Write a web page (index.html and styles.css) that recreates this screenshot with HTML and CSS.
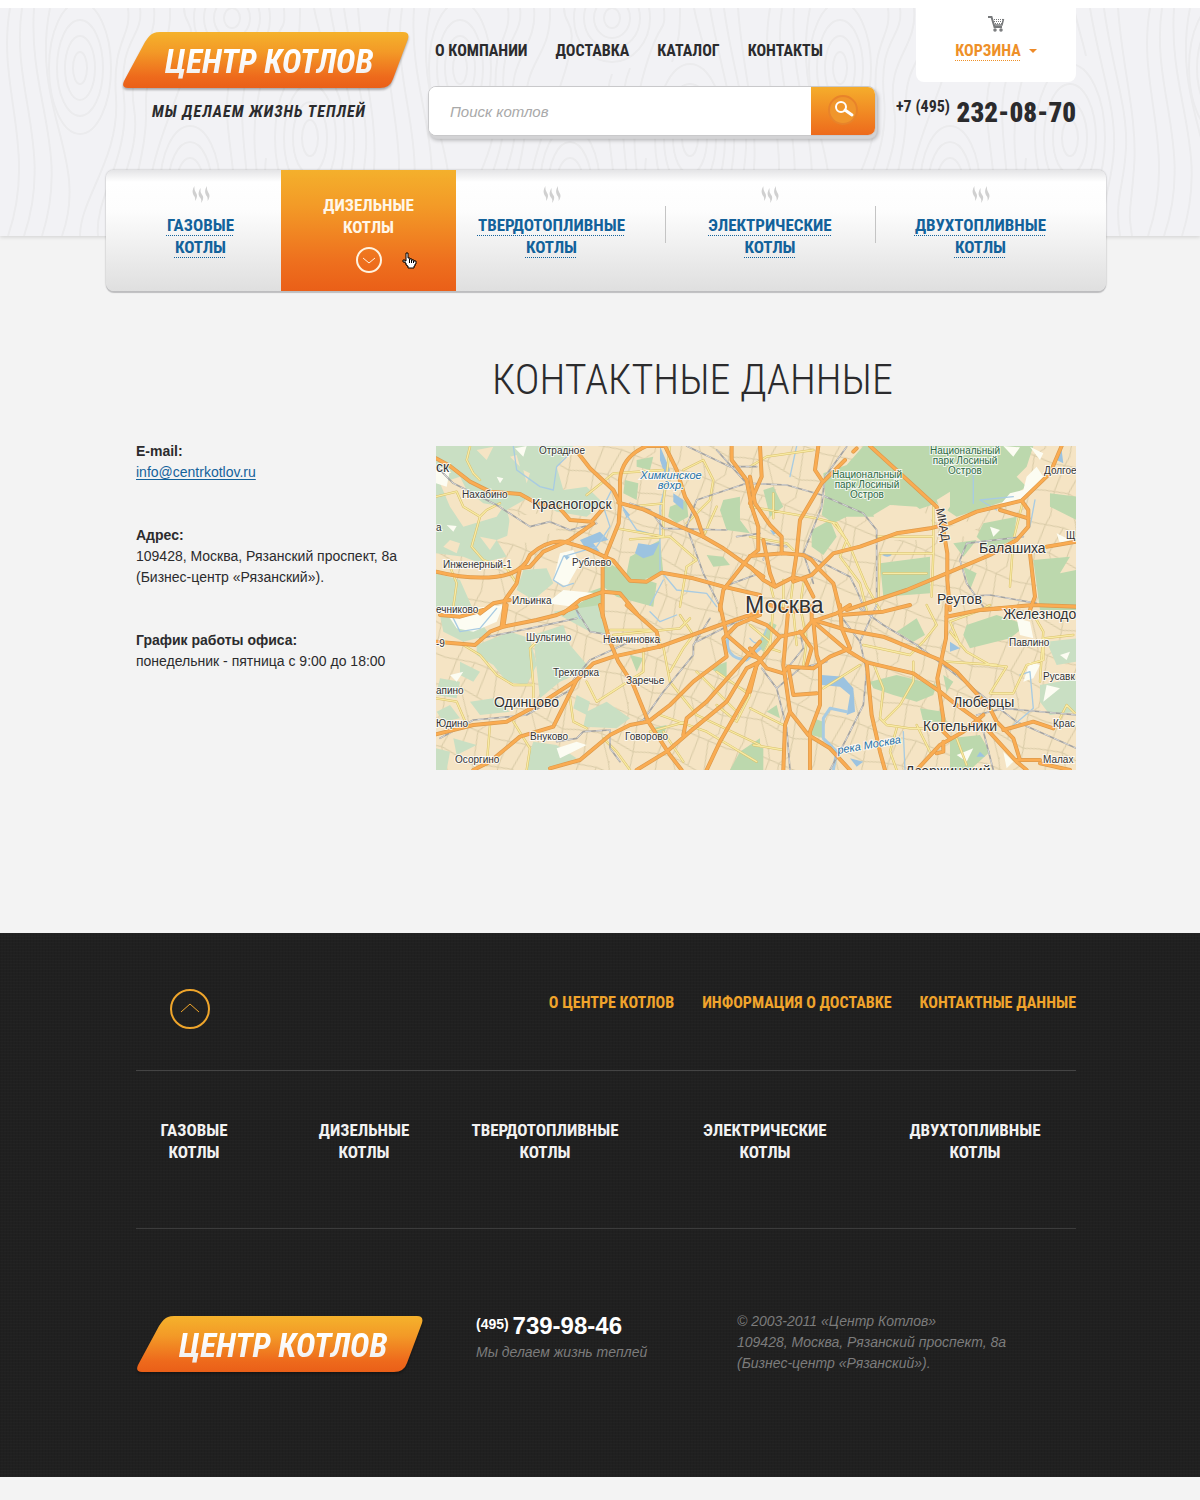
FILE: index.html
```html
<!DOCTYPE html>
<html lang="ru">
<head>
<meta charset="utf-8">
<meta name="viewport" content="width=device-width, initial-scale=1">
<title>Центр Котлов — контактные данные</title>
<link rel="stylesheet" href="styles.css">
</head>
<body>
<svg class="sprite" width="0" height="0" aria-hidden="true">
  <defs>
    <linearGradient id="flame" x1="0" y1="0" x2="0" y2="1">
      <stop offset="0" stop-color="#f5b22c"/><stop offset=".35" stop-color="#f39a27"/><stop offset=".8" stop-color="#ee6a1c"/><stop offset="1" stop-color="#ea5f18"/>
    </linearGradient>
    <linearGradient id="logoText" x1="0" y1="0" x2="0" y2="1">
      <stop offset=".3" stop-color="#fff"/><stop offset="1" stop-color="#ececec"/>
    </linearGradient>
    <symbol id="steam" viewBox="0 0 18 17">
      <path d="M2.500 0C-.5 5 .5 8 2.500 10.500Q3.500 12 3 15C6 11 5 8 3.800 6.500Q2 4 2.500 0Z"/>
      <path d="M8.500 2C5.500 7 6.500 10 8.500 12Q9.800 13.500 9.200 17C12 13 11.500 10 9.900 8.500Q8 6 8.500 2Z"/>
      <path d="M15 0C12 5 13 8 15 10.500Q16 12 15.500 15C18.500 11 17.500 8 16.300 6.500Q14.500 4 15 0Z"/>
    </symbol>
    <symbol id="logo" viewBox="0 0 288 60">
      <path d="M32 1Q34 0 38 0H281Q288 0 286 7L271 47Q268 56 258 56H6Q-1 56 2 49L23 10Q28 2 32 1Z" fill="url(#flame)"/>
      <text class="logo-text" x="43" y="41" fill="url(#logoText)">ЦЕНТР КОТЛОВ</text>
    </symbol>
  </defs>
</svg>

<header class="header">
  <svg class="wood" aria-hidden="true">
    <defs>
      <pattern id="grain" width="380" height="228" patternUnits="userSpaceOnUse">
        <g fill="none" stroke="#ebebed" stroke-width="2">
          <ellipse cx="80" cy="60" rx="7" ry="16"/><ellipse cx="80" cy="60" rx="15" ry="32"/><ellipse cx="80" cy="60" rx="23" ry="48"/><ellipse cx="80" cy="60" rx="31" ry="66"/>
          <ellipse cx="232" cy="10" rx="8" ry="10"/><ellipse cx="232" cy="10" rx="18" ry="20"/><ellipse cx="232" cy="10" rx="28" ry="31"/><ellipse cx="232" cy="10" rx="38" ry="44"/>
          <ellipse cx="190" cy="180" rx="6" ry="14"/><ellipse cx="190" cy="180" rx="14" ry="30"/><ellipse cx="190" cy="180" rx="22" ry="46"/><ellipse cx="190" cy="180" rx="30" ry="62"/>
          <ellipse cx="310" cy="130" rx="8" ry="18"/><ellipse cx="310" cy="130" rx="17" ry="36"/><ellipse cx="310" cy="130" rx="26" ry="54"/><ellipse cx="310" cy="130" rx="35" ry="74"/>
          <path d="M10 0C-4 80 38 140 8 228M22 0C10 80 54 140 24 228M34 0C28 90 70 140 42 228M50 0C30 100 90 150 62 228M80 228C80 190 120 150 116 90S132 30 128 0M98 228C94 190 130 150 124 90S144 30 140 0M116 228C110 180 142 150 134 100S158 40 154 0M134 228C124 190 148 150 146 100S172 50 170 0M150 228C140 160 172 110 186 60S184 20 184 0M232 228C244 170 216 110 232 66M246 228C256 170 230 110 250 60M262 228C264 180 244 140 262 72S286 30 284 0M276 228C274 210 262 180 266 150M330 0C340 60 356 100 354 140S340 190 346 228M344 0C352 60 368 100 366 140S354 190 360 228M358 0C362 60 378 110 374 160S368 200 372 228M314 0C318 20 322 30 326 48M300 0C300 20 300 30 292 54"/>
        </g>
      </pattern>
    </defs>
    <rect width="100%" height="100%" fill="url(#grain)"/>
  </svg>
  <div class="wrap header-grid">
    <div class="brand">
      <a href="#" class="logo" aria-label="Центр Котлов"><svg width="288" height="60"><use href="#logo"/></svg></a>
      <p class="slogan">МЫ ДЕЛАЕМ ЖИЗНЬ ТЕПЛЕЙ</p>
    </div>
    <div class="center">
      <nav class="topnav">
        <a href="#">О КОМПАНИИ</a><a href="#">ДОСТАВКА</a><a href="#">КАТАЛОГ</a><a href="#">КОНТАКТЫ</a>
      </nav>
      <form class="search">
        <input type="search" placeholder="Поиск котлов" aria-label="Поиск котлов">
        <button type="button" aria-label="Найти">
          <svg width="32" height="32" viewBox="0 0 32 32"><circle cx="16" cy="16" r="14" fill="#f0962c" stroke="#e8832a" stroke-width="2"/><circle cx="14" cy="13" r="5" fill="none" stroke="#fff" stroke-width="2"/><path d="M18 16L25 21" stroke="#fff" stroke-width="3" stroke-linecap="round"/></svg>
        </button>
      </form>
    </div>
    <div class="side">
      <a href="#" class="cart">
        <svg width="17" height="16" viewBox="0 0 17 16" fill="none" stroke="#77797b"><path d="M0 1H3.500L6.500 11H14" stroke-width="2"/><path d="M15.500 3L14 9H6.500" stroke-width="1.500"/><path d="M6 3.500H15M6 5.500H15M7 7.500H14" stroke-width="1" stroke-dasharray="1 1"/><circle cx="7" cy="14" r="1" stroke-width="1.500"/><circle cx="13" cy="14" r="1" stroke-width="1.500"/></svg>
        <span class="cart-label"><span class="dotted">КОРЗИНА</span><i class="caret"></i></span>
      </a>
      <p class="phone"><span>+7 (495)</span> <b>232-08-70</b></p>
    </div>
  </div>
</header>

<nav class="wrap tabs">
  <a href="#" class="tab tab-gas"><svg class="steam"><use href="#steam"/></svg><span class="dotted">ГАЗОВЫЕ<br>КОТЛЫ</span></a>
  <a href="#" class="tab tab-active"><span>ДИЗЕЛЬНЫЕ<br>КОТЛЫ</span>
    <svg class="more" width="28" height="28" viewBox="0 0 28 28" fill="none" stroke="#fff3e0"><circle cx="14" cy="14" r="12" stroke-width="2"/><path d="M8 12L14 17L20 12"/></svg>
    <svg class="pointer" width="16" height="17" viewBox="0 0 16 17"><path d="M4 1H6V6H8V7H10V8H12V9H14V12H13V14H12V16H6V14H5V13H4V11H3V10H1V8H3V9H4Z" fill="#fff" stroke="#000"/><path d="M7.500 7V11M9.500 8V11M11.500 9V11" stroke="#000"/></svg>
  </a>
  <a href="#" class="tab tab-solid"><svg class="steam"><use href="#steam"/></svg><span class="dotted">ТВЕРДОТОПЛИВНЫЕ<br>КОТЛЫ</span></a>
  <a href="#" class="tab tab-line"><svg class="steam"><use href="#steam"/></svg><span class="dotted">ЭЛЕКТРИЧЕСКИЕ<br>КОТЛЫ</span></a>
  <a href="#" class="tab tab-line tab-dual"><svg class="steam"><use href="#steam"/></svg><span class="dotted">ДВУХТОПЛИВНЫЕ<br>КОТЛЫ</span></a>
</nav>

<main class="wrap main">
  <h1>КОНТАКТНЫЕ ДАННЫЕ</h1>
  <div class="contacts">
    <div class="info">
      <section><h2>E-mail:</h2><p><a href="mailto:info@centrkotlov.ru">info@centrkotlov.ru</a></p></section>
      <section><h2>Адрес:</h2><p>109428, Москва, Рязанский проспект, 8а<br>(Бизнес-центр «Рязанский»).</p></section>
      <section><h2>График работы офиса:</h2><p>понедельник - пятница с 9:00 до 18:00</p></section>
    </div>
    <svg class="map" viewBox="0 0 640 324" role="img" aria-label="Карта Москвы">
      <defs>
        <pattern id="streets" width="74" height="62" patternUnits="userSpaceOnUse" patternTransform="rotate(18)">
          <path d="M0 12L30 8L74 12M30 8L24 36L40 62M0 40L24 36L60 44L74 40M60 44L54 10M12 10L10 38M44 9L42 40M10 38L14 62M60 44L62 62M40 62V60M14 0L12 10M40 0L44 9M62 0L54 10" fill="none" stroke="#d8caa6" stroke-width="1"/>
        </pattern>
        <g id="highways">
          <g transform="translate(-6 -6) scale(.3333)">
            <path d="M18 55L60 78L120 125L180 155L270 162L320 190L385 200L420 240L485 245L520 205"/>
            <path d="M445 40L480 85L550 150L570 190L566 250L530 340L518 380V530"/>
            <path d="M700 18H650Q575 50 570 120V190"/>
            <path d="M565 188L640 208L740 255L820 290L880 325L950 375L1000 410"/>
            <path d="M705 18L740 90L765 170L800 230L820 290"/>
            <path d="M18 395Q120 420 200 410T300 345Q350 300 400 305L470 325L550 362L600 422L650 425L695 398L790 415L880 440L990 465"/>
            <path d="M490 250L420 300L340 335L300 380L270 385L260 430L225 480L215 560"/>
            <path d="M905 18V60L950 120L965 200L985 260V330L960 350L935 380L880 450L870 510"/>
            <path d="M150 520L190 490L240 480M400 520L450 480L520 455L570 460L620 520"/>
          </g>
          <g transform="translate(314 -6) scale(.3333)">
            <path d="M360 18L450 100L560 200L580 270L592 340V420L600 510"/>
            <path d="M30 18L35 110L0 190M205 18L195 90L215 120M320 25L310 35M285 60L215 130L150 240L140 340L128 420"/>
            <path d="M0 110L15 190L60 255L95 290V340"/>
            <path d="M0 348L100 340L160 345L185 360L210 390L250 430L270 510"/>
            <path d="M0 380L40 420L75 440L130 412L165 420L190 470M40 300L60 400L75 440"/>
            <path d="M130 425L185 405L250 340L330 320L440 280L540 265L600 250L680 215L815 182L900 100L935 18"/>
            <path d="M815 182L835 210V260L800 300L720 345L590 400L470 450L380 480L290 510"/>
            <path d="M750 210L835 235M840 340L855 470L840 510M890 320L980 305M690 510L850 495L980 500"/>
          </g>
          <g transform="translate(-6 159) scale(.3333)">
            <path d="M510 0L540 110L565 170L610 240L655 350L720 450L755 495"/>
            <path d="M18 110L135 120L180 80L220 65L320 45L380 30L440 5M230 0L220 65"/>
            <path d="M18 388L130 360L230 350L340 290L440 225L490 175L550 155L690 125L870 60L990 20"/>
            <path d="M440 225L370 365L270 395L180 470L130 495"/>
            <path d="M590 0L680 80L690 125"/>
            <path d="M360 490L450 465L540 390L600 360L655 350L720 300L790 230L890 155L880 100L920 60L990 30"/>
            <path d="M620 495L710 440L780 380L890 290L950 190L990 170M760 390L770 340L830 290L990 110"/>
            <path d="M830 495L870 410L950 270L980 180M870 0L890 90L960 150L990 160"/>
            <path d="M30 30L90 35L160 15"/>
          </g>
          <g transform="translate(314 159) scale(.3333)">
            <path d="M0 40L50 60L90 95L160 80L185 50L185 0M60 0L120 20L180 15M185 50L260 25L300 0"/>
            <path d="M115 10L100 180L120 320L175 390L240 430L300 495"/>
            <path d="M0 130L50 190L100 205L115 185L190 190L240 155L300 130L275 70L270 0"/>
            <path d="M190 50L290 135L350 172L490 205L570 260L620 300L690 350L800 470L830 495"/>
            <path d="M190 45L290 75L400 95L570 165L620 200L720 310L740 350L790 400L810 465"/>
            <path d="M590 0L588 100L562 220L580 340V380L600 400"/>
            <path d="M350 172L365 330L390 440L405 495M190 50L200 150L210 180V300L180 380V495"/>
            <path d="M100 495L105 360L120 320M115 185L130 270L200 265M150 80L185 130L170 180"/>
            <path d="M500 495L570 420L640 380L700 330M760 375L850 350L910 370M800 465H870M870 475L960 495M580 410V440L560 445"/>
            <path d="M270 30L400 20L480 0M590 35L690 15L760 10M0 260L20 180L90 95"/>
          </g>
        </g>
        <g id="roads">
          <g transform="translate(-6 -6) scale(.3333)">
            <path d="M120 20L110 60L130 100L150 120M18 170L80 155L100 200L150 230L170 210L210 190M150 230L125 320L160 360L230 385L260 430M470 165L520 125L550 100L700 90M600 200L700 190L720 18M700 190L700 290L560 265M600 298L720 290L800 360L770 380L750 500M760 90L820 60L850 120L840 180L770 250M860 200L820 290M60 380L80 430L70 500"/>
          </g>
          <g transform="translate(314 -6) scale(.3333)">
            <path d="M0 80L50 50L190 30M0 200L200 235L260 250L300 320L350 440L390 510M250 250L290 300L270 350L330 430L350 510M380 290H550M390 340H550V200M390 345L385 480M550 340L545 470M530 400H400M70 160V235M820 180L790 300L780 440M0 290L110 310L130 330M60 430L70 470M100 420V500M130 420L120 500M160 430L150 500"/>
          </g>
          <g transform="translate(-6 159) scale(.3333)">
            <path d="M100 120L150 150L200 210L250 240H310L300 130L340 90M310 240V300M540 75H680M550 90L750 70L780 40M640 130V200L500 290L470 230M700 125L720 230L800 330L990 420M750 30L790 90L760 130L720 200M860 200L960 270L920 350L860 300M690 330L830 380L980 470M700 380L760 470M18 280L80 290L110 360M420 280L430 350L470 370M180 360L170 480M250 350L300 430L290 495M660 380L770 350M520 400L560 440L600 495M800 200L930 330"/>
          </g>
          <g transform="translate(314 159) scale(.3333)">
            <path d="M0 310L100 360M10 420L100 435M370 175L400 250L390 340L410 360L480 370L560 370M400 350L450 300L490 230V170M530 0L560 60L520 110L480 150L340 120M600 80L650 140L720 180L770 185L720 265H790L830 180L880 165V100L970 90M590 170L740 180M130 20L140 120M150 0L170 110L160 180M630 120L600 50L680 20L720 0M840 10L880 80L870 230M440 495L420 440L440 370M500 360L540 440M620 400L650 480M930 340L950 300L980 330M0 60L60 110L30 170M220 250L330 180M70 0L60 130L90 140"/>
          </g>
        </g>
        <g id="rails">
          <g transform="translate(-6 -6) scale(.3333)"><path d="M20 80L70 130L200 195L300 260L360 245L420 270L500 250M600 190L660 210L700 265L890 270M860 30L950 130L800 180L770 260L820 400L870 500M770 18L900 80L980 80M920 290L990 280M880 440L990 400"/></g>
          <g transform="translate(314 -6) scale(.3333)"><path d="M0 130L110 135L215 165L340 220L380 270V480M290 20L225 110L215 200L160 340L190 430M40 360L50 310L110 320M160 340L300 410L320 450L345 510M820 290L650 310L630 360L650 430L700 500M640 470L720 465L860 490"/></g>
          <g transform="translate(-6 159) scale(.3333)"><path d="M430 0L480 80L540 90M30 400L130 345L290 330L430 250M430 225L480 165L600 110M540 390L640 345L700 260L790 150V120L840 40M380 410L440 400L460 380L540 375V430L570 470M150 100L300 70L440 40M800 110L940 40"/></g>
          <g transform="translate(314 159) scale(.3333)"><path d="M330 10L400 60L500 120L580 180L720 290L800 350L980 430M380 0L330 110L350 200L340 300L290 400L240 495M35 190L80 250L110 370L120 495M80 250L150 190L230 170M680 330L760 310L980 330M690 340L730 495M270 30L330 110M150 80L160 130L120 180"/></g>
        </g>
      </defs>
      <rect width="640" height="324" fill="#f5e4c4"/>
      <rect width="640" height="324" fill="url(#streets)"/>
      <g fill="#c9dfc3">
        <g transform="translate(-6 -6) scale(.3333)">
          <path d="M18 18H430L380 80L400 150L470 140L520 190L470 230L380 215L300 170L230 210L250 280L200 300L230 350L150 370L100 350L18 340ZM18 400L90 420L130 510H18ZM280 390L350 385L370 430L310 480L260 450Z"/>
          <path fill="#bcd8ad" d="M620 60L670 50L660 90L620 80ZM585 120L625 130L620 180L580 160ZM720 200L770 180L775 230L740 250L715 230ZM880 180L930 170V240L960 280L890 270L870 210ZM600 350L690 300L700 400L620 425L590 400ZM520 360L590 400L680 430L670 500L560 470L520 440ZM410 480L520 440V510H440ZM830 345L880 350L900 375L850 380Z"/>
        </g>
        <g transform="translate(314 -6) scale(.3333)" fill="#bcd8ad">
          <path d="M340 18H850L830 80L800 110L830 140L760 185L620 230L560 190L500 210L430 195L380 230L290 230L250 250L215 225L225 165L220 100L290 75ZM185 270L240 240L260 290L220 345L185 320ZM390 370L540 350V460L400 470ZM40 150L70 140L100 200L60 230ZM700 250L800 230L790 300L720 330L680 290ZM610 310L680 300L640 350ZM850 360L960 350L930 400L980 390V510H870ZM640 380L680 400L660 450ZM900 160L980 170V240L900 200Z"/>
        </g>
        <g transform="translate(-6 159) scale(.3333)">
          <path d="M30 30L120 10L180 90L100 110L40 80ZM140 120L240 80L300 100L320 180L290 240L230 230L190 180L140 150ZM310 90L400 60L420 120L480 190L390 230L330 280L320 190ZM370 20L510 0L530 90L480 80ZM90 170L150 200L130 230L90 210ZM30 220L90 230L80 280L18 270ZM120 290L190 280L240 320L150 330ZM20 320L60 300L90 340L40 350ZM310 410L380 420L440 460L350 495L290 495L300 440ZM470 320L530 290L600 340L560 370L460 365ZM70 400L140 420L80 450ZM18 430L60 440L50 495H18ZM440 270L480 290L470 330L430 310Z"/>
          <path fill="#bcd8ad" d="M990 400L930 440L900 495H990ZM600 150L640 160L620 200ZM840 190L890 170V220ZM665 370L710 360L700 400Z"/>
        </g>
        <g transform="translate(314 159) scale(.3333)">
          <path fill="#bcd8ad" d="M440 80L500 40L525 90L490 110ZM650 60L740 30L830 60L780 100L660 130L640 90ZM360 230L440 210L560 240L550 270L500 290L430 270L370 250ZM580 210L610 230L590 260ZM510 310L580 320L590 350L520 350ZM60 50L80 60L40 140L20 120ZM0 420L40 430V495H0ZM190 340L220 350V400L185 390ZM600 400L690 390L720 440L660 495H600ZM50 320L80 300L90 340Z"/>
          <path d="M890 110L980 100V170L920 180ZM870 240L980 220V320L900 330L870 290Z"/>
        </g>
      </g>
      <g fill="#f5e4c4">
        <g transform="translate(-6 -6) scale(.3333)"><path d="M30 130L90 110L110 150L160 190L220 200L200 230L100 260L60 200ZM240 230L330 220L380 270L300 310L230 300ZM150 290L200 300L180 330ZM140 30L190 20L170 60ZM240 50L260 45L270 80ZM60 300L90 310L80 340L40 320ZM280 90L300 100L290 130Z"/></g>
        <g transform="translate(314 -6) scale(.3333)"><path d="M560 180L600 155L600 200L580 230ZM370 225L420 195L500 200L540 230L560 300H400ZM600 260L700 230L690 260L640 290Z"/></g>
      </g>
      <g fill="#fcfcf2">
        <g transform="translate(-6 -6) scale(.3333)"><path d="M390 340L430 330L450 370L410 440L370 420ZM400 450L500 460L430 500L350 490ZM18 80L60 90L50 140L18 130ZM255 25L290 18L280 50ZM200 110L220 115L210 130ZM50 255L80 258L70 275Z"/></g>
        <g transform="translate(314 -6) scale(.3333)"><path d="M755 190L780 160L820 150L830 110L860 80L880 110L820 180L790 190ZM760 18L810 22L790 50ZM840 20L880 40L870 60ZM720 260L750 270L730 290ZM920 280L960 300L930 310Z"/></g>
        <g transform="translate(-6 159) scale(.3333)"><path d="M18 20L220 0L200 50L130 80L80 70L60 40ZM380 430L440 410L470 420L390 460ZM60 210L100 200L80 230Z"/></g>
        <g transform="translate(314 159) scale(.3333)"><path d="M800 40L840 50L850 100L810 90ZM840 170L870 180L850 220L820 230ZM890 240L930 250L880 290ZM620 450L670 430L650 470ZM930 150L960 140L950 165ZM760 440L790 470L770 490Z"/></g>
      </g>
      <g class="water">
        <g transform="translate(-6 -6) scale(.3333)"><path d="M690 18L720 90L710 120L690 60ZM730 160L760 180L760 210L730 185ZM625 310L660 315L690 305L670 345L640 355L615 340ZM450 300L510 275L535 300L490 310L510 335L470 330ZM575 195L600 225L590 235ZM400 345L420 350L410 360Z"/><path class="stream" d="M250 18L260 90L330 140L370 150L380 80L430 30M545 150L520 200L540 260L500 320L400 350L370 420L400 440L430 430M580 210L620 270L690 290V390L740 450L830 460L860 500M690 290V200L715 100M660 495L700 420"/></g>
        <g transform="translate(314 -6) scale(.3333)"><path d="M935 30L940 70L920 60ZM60 270L85 275L70 285ZM396 345Q412 332 426 344Q414 356 396 345Z"/><path class="stream" d="M670 60V190M740 210L690 180L790 170M855 180L840 260M140 18L120 110"/></g>
        <g transform="translate(-6 159) scale(.3333)"><path class="stream" d="M60 20L90 80L150 70L200 10M440 20L450 40M660 20L690 50L740 30"/><path class="stream river" d="M895 90Q880 160 950 165L990 130"/></g>
        <g transform="translate(314 159) scale(.3333)"><path d="M215 210L280 215L310 250L315 320L290 330L300 270L270 245L215 240ZM600 110L630 130L600 140ZM300 460L340 470L320 485ZM690 440L705 455L680 455Z"/><path class="stream river" d="M290 320L240 310L220 340V400L260 440L250 495"/><path class="stream" d="M0 100Q30 140 50 70M460 380L465 495M810 210L840 200L850 310L780 370"/></g>
      </g>
      <use href="#roads" class="road-case"/><use href="#roads" class="road-fill"/>
      <use href="#rails" class="rail-case"/><use href="#rails" class="rail-fill"/>
      <use href="#highways" class="highway-case"/><use href="#highways" class="highway-fill"/>
      <g class="places">
        <text x="103" y="8">Отрадное</text><text x="26" y="52">Нахабино</text><text x="7" y="122">Инженерный-1</text><text x="136" y="120">Рублево</text><text x="76" y="158">Ильинка</text><text x="0" y="167">ечниково</text><text x="90" y="195">Шульгино</text><text x="167" y="197">Немчиновка</text><text x="0" y="201">-9</text><text x="117" y="230">Трехгорка</text><text x="190" y="238">Заречье</text><text x="0" y="248">апино</text><text x="0" y="281">Юдино</text><text x="94" y="294">Внуково</text><text x="189" y="294">Говорово</text><text x="19" y="317">Осоргино</text><text x="0" y="85">а</text><text x="608" y="28">Долгое</text><text x="630" y="93">Щ</text><text x="573" y="200">Павлино</text><text x="607" y="234">Русавк</text><text x="617" y="281">Крас</text><text x="607" y="317">Малах</text>
      </g>
      <g class="towns">
        <text x="0" y="26">ск</text><text x="96" y="63">Красногорск</text><text x="543" y="107">Балашиха</text><text x="501" y="158">Реутов</text><text x="567" y="173">Железнодо</text><text x="58" y="261">Одинцово</text><text x="517" y="261">Люберцы</text><text x="487" y="285">Котельники</text><text x="469" y="330">Дзержинский</text>
      </g>
      <text class="capital" x="309" y="167">Москва</text>
      <g class="parks">
        <text x="431" y="32">Национальный</text><text x="431" y="42">парк Лосиный</text><text x="431" y="52">Остров</text><text x="529" y="8">Национальный</text><text x="529" y="18">парк Лосиный</text><text x="529" y="28">Остров</text>
      </g>
      <g class="rivers"><text x="235" y="33">Химкинское</text><text x="235" y="43">вдхр.</text><text transform="translate(402 308) rotate(-10)">река Москва</text></g>
      <text class="mkad" transform="translate(500 63) rotate(80)">МКАД</text>
    </svg>
  </div>
</main>

<footer class="footer">
  <div class="wrap footer-inner">
    <div class="footer-top">
      <a href="#" class="up" aria-label="Наверх"><svg width="40" height="40" viewBox="0 0 40 40" fill="none" stroke="#efa52b"><circle cx="20" cy="20" r="19" stroke-width="2"/><path d="M11 23L20 15L29 23"/></svg></a>
      <nav class="footer-links"><a href="#">О ЦЕНТРЕ КОТЛОВ</a><a href="#">ИНФОРМАЦИЯ О ДОСТАВКЕ</a><a href="#">КОНТАКТНЫЕ ДАННЫЕ</a></nav>
    </div>
    <nav class="footer-cats">
      <a href="#">ГАЗОВЫЕ<br>КОТЛЫ</a><a href="#">ДИЗЕЛЬНЫЕ<br>КОТЛЫ</a><a href="#">ТВЕРДОТОПЛИВНЫЕ<br>КОТЛЫ</a><a href="#">ЭЛЕКТРИЧЕСКИЕ<br>КОТЛЫ</a><a href="#">ДВУХТОПЛИВНЫЕ<br>КОТЛЫ</a>
    </nav>
    <div class="footer-bottom">
      <a href="#" class="logo" aria-label="Центр Котлов"><svg width="288" height="60"><use href="#logo"/></svg></a>
      <div class="footer-phone"><p class="number"><span>(495)</span> <b>739-98-46</b></p><p class="muted">Мы делаем жизнь теплей</p></div>
      <p class="muted">© 2003-2011 «Центр Котлов»<br>109428, Москва, Рязанский проспект, 8а<br>(Бизнес-центр «Рязанский»).</p>
    </div>
  </div>
</footer>
</body>
</html>
```
FILE: styles.css
```css
:root {
  --cond: "Roboto Condensed", "Liberation Sans Narrow", "Roboto", sans-serif;
  --sans: "Liberation Sans", Arial, sans-serif;
}
* { box-sizing: border-box; }
body {
  margin: 0;
  border-top: 8px solid #fff;
  background: #f3f3f3;
  color: #2b2b2d;
  font: 14px/21px var(--sans);
}
h1, h2, p { margin: 0; }
a { text-decoration: none; color: inherit; }
svg { display: block; }
.sprite { position: absolute; }
.wrap { width: 100%; max-width: 1000px; margin: 0 auto; }
.logo-text { font: italic bold 33px var(--cond); }
.logo { display: block; }
.logo svg { filter: drop-shadow(0 2px 1px rgba(0, 0, 0, .3)); }

.header {
  position: relative;
  height: 228px;
  padding-left: 12px;
  background: #f2f2f5;
  box-shadow: 0 1px 4px rgba(0, 0, 0, .15);
}
.wood { position: absolute; inset: 0; width: 100%; height: 100%; }
.header-grid {
  position: relative;
  display: grid;
  grid-template-columns: 286px 448px 180px;
  gap: 20px;
  padding-left: 16px;
}
.brand { padding-top: 24px; }
.slogan {
  padding: 9px 0 0 30px;
  font: italic bold 16px/22px var(--cond);
  letter-spacing: 1px;
  white-space: nowrap;
}
.topnav {
  display: flex;
  gap: 28px;
  padding: 32px 0 0 7px;
  font: bold 16px/22px var(--cond);
  white-space: nowrap;
}
.search {
  display: flex;
  height: 50px;
  margin-top: 24px;
  border: 1px solid #c9c9cb;
  border-radius: 8px;
  overflow: hidden;
  background: #fff;
  box-shadow: 1px 3px 1px #d3d3d5, 2px 4px 4px rgba(0, 0, 0, .3);
}
.search input {
  flex: 1;
  min-width: 0;
  padding: 0 21px;
  border: 0;
  outline: 0;
  background: #fff;
  font: italic 15px var(--sans);
}
.search input::placeholder { color: #a9a9a9; opacity: 1; }
.search button {
  display: grid;
  place-items: center;
  width: 64px;
  padding: 0 0 2px;
  border: 0;
  background: linear-gradient(#f5ad2c, #ed6a1c);
}
.cart {
  display: flex;
  flex-direction: column;
  align-items: center;
  height: 74px;
  margin-left: 20px;
  padding-top: 8px;
  border-radius: 0 0 8px 8px;
  background: #fff;
  color: #ee9028;
  font: bold 16px/22px var(--cond);
}
.cart-label { display: flex; align-items: center; gap: 8px; padding-top: 8px; }
.dotted { text-decoration: underline dotted 1px; text-underline-offset: 4px; text-decoration-skip-ink: none; }
.caret { border: 4px solid transparent; border-top-color: #ee8a28; border-bottom: 0; }
.phone {
  display: flex;
  justify-content: space-between;
  padding-top: 12px;
  font: bold 16px/26px var(--cond);
  white-space: nowrap;
}
.phone b { font-size: 27px; line-height: 38px; }

.tabs {
  position: relative;
  left: 6px;
  display: grid;
  grid-template-columns: 175fr 175fr 209fr 210fr 231fr;
  height: 121px;
  margin-top: -66px;
  border-radius: 8px;
  background: linear-gradient(#e4e4e6, #fff 12px, #fdfdfd 40px, #dfdfdf);
  box-shadow: 0 2px 1px #bdbdbf, 0 0 2px rgba(0, 0, 0, .3);
  color: #13629b;
  font: bold 17px/22px var(--cond);
  text-align: center;
}
.tab { display: flex; flex-direction: column; align-items: center; padding-top: 16px; }
.steam { width: 18px; height: 17px; margin-bottom: 11px; fill: #d0d0d0; }
.tab-gas { padding-left: 14px; }
.tab-solid { padding-right: 18px; }
.tab-dual { padding-right: 20px; }
.tab-line { background: linear-gradient(#c4c4c4, #c4c4c4) left 36px / 1px 37px no-repeat; }
.tab-active {
  position: relative;
  padding-top: 24px;
  background: linear-gradient(#f4b02c, #f39a27 30%, #ee701e 75%, #ea5f18);
  color: #fff6e8;
}
.more { margin-top: 8px; }
.pointer { position: absolute; left: 121px; top: 82px; }

.main { position: relative; left: 6px; padding: 60px 30px 163px; }
h1 { padding-left: 356px; font: 300 42px/58px var(--cond); white-space: nowrap; }
.contacts { display: grid; grid-template-columns: 300px 1fr; padding-top: 37px; }
.info { display: grid; align-content: start; gap: 42px; margin-top: -5px; }
.info h2 { font-size: 14px; line-height: 21px; }
.info a { color: #13629b; text-decoration: underline; text-underline-offset: 2px; }

.map { width: 100%; height: auto; overflow: hidden; }
.map use, .stream { fill: none; stroke-linejoin: round; stroke-linecap: round; }
.water { fill: #9cc3e0; }
.stream { stroke: #a8cbe2; stroke-width: 4px; }
.river { stroke-width: 9px; }
.road-case { stroke: #d9c06a; stroke-width: 7px; }
.road-fill { stroke: #f8eaa4; stroke-width: 4px; }
.rail-case { stroke: #a3a3a3; stroke-width: 5px; }
.rail-fill { stroke: #eee; stroke-width: 2px; stroke-dasharray: 16px; }
.highway-case { stroke: #dc9a4c; stroke-width: 12px; }
.highway-fill { stroke: #faac52; stroke-width: 8px; }
.map text { font-family: var(--sans); fill: #333; paint-order: stroke; stroke: rgba(255, 255, 255, .8); stroke-width: 2px; }
.places { font-size: 10px; }
.towns { font-size: 14px; }
.capital { font-size: 23px; }
.map .parks { font-size: 10px; text-anchor: middle; }
.map .parks text { fill: #2d6a45; }
.map .rivers { font-size: 11px; font-style: italic; }
.map .rivers text { fill: #2471a8; }
.rivers text:not([transform]) { text-anchor: middle; }
.mkad { font-size: 12px; }

.footer {
  min-height: 544px;
  padding-left: 12px;
  background: repeating-linear-gradient(rgba(255, 255, 255, .01) 0 1px, transparent 1px 3px), repeating-linear-gradient(90deg, rgba(0, 0, 0, .06) 0 1px, transparent 1px 3px), #202020;
  color: #f2f2f2;
}
.footer-inner { padding: 0 30px; }
.footer-top {
  display: flex;
  justify-content: space-between;
  height: 138px;
  padding: 56px 0 0 34px;
  border-bottom: 1px solid #444;
}
.footer-links { display: flex; gap: 28px; padding-top: 3px; color: #f0a42c; font: bold 16px/22px var(--cond); white-space: nowrap; }
.footer-cats {
  display: grid;
  grid-template-columns: minmax(0, 116fr) minmax(0, 224fr) minmax(0, 138fr) minmax(0, 302fr) minmax(0, 118fr) minmax(0, 42fr);
  justify-items: center;
  height: 158px;
  padding-top: 48px;
  border-bottom: 1px solid #3c3c3c;
  font: bold 17px/22px var(--cond);
  text-align: center;
  white-space: nowrap;
}
.footer-bottom { display: grid; grid-template-columns: 340px 261px 1fr; padding-top: 82px; }
.footer-bottom .logo { padding-top: 5px; }
.muted { color: #7c7c7c; font-style: italic; }
.number { color: #fff; font-weight: bold; line-height: 26px; }
.number span { vertical-align: 5px; }
.number b { font-size: 24px; }
```
